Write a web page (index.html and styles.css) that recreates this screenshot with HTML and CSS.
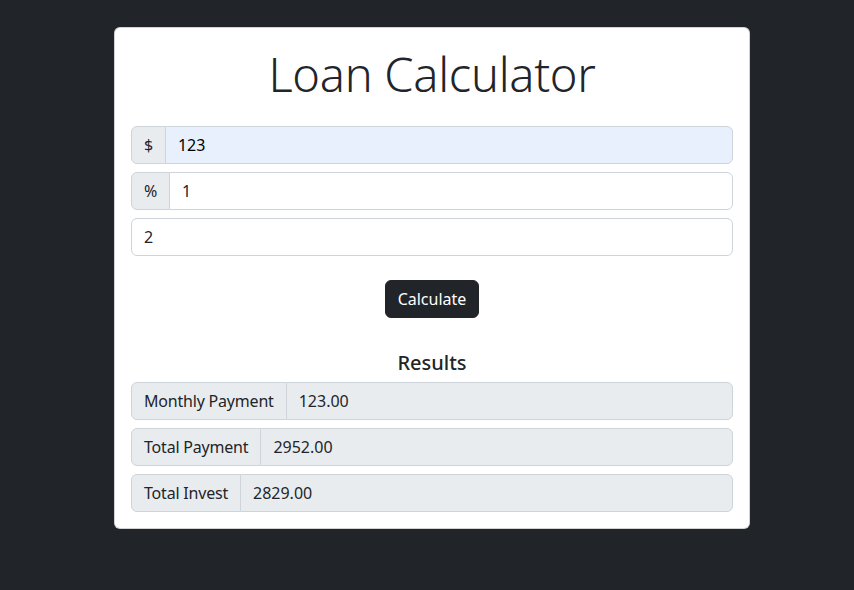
FILE: index.html
```html
<!DOCTYPE html>
<html lang="en">
<head>
<meta charset="utf-8">
<title>Loan Calculator</title>
<link rel="stylesheet" href="styles.css">
</head>
<body>
<div class="card">
  <h1 class="title">Loan Calculator</h1>
  <div class="field">
    <span class="addon">$</span>
    <input class="control autofill" type="text" value="123">
  </div>
  <div class="field">
    <span class="addon">%</span>
    <input class="control" type="text" value="1">
  </div>
  <div class="field">
    <input class="control" type="text" value="2">
  </div>
  <div class="actions">
    <button class="btn">Calculate</button>
  </div>
  <h2 class="results-title">Results</h2>
  <div class="field">
    <span class="addon">Monthly Payment</span>
    <input class="control readonly" type="text" value="123.00" readonly>
  </div>
  <div class="field">
    <span class="addon">Total Payment</span>
    <input class="control readonly" type="text" value="2952.00" readonly>
  </div>
  <div class="field last">
    <span class="addon">Total Invest</span>
    <input class="control readonly" type="text" value="2829.00" readonly>
  </div>
</div>
</body>
</html>
```
FILE: styles.css
```css
* { box-sizing: border-box; }
html, body { margin: 0; padding: 0; }
body {
  background: #212529;
  font-family: "Noto Sans", "Open Sans", sans-serif;
  font-size: 16px;
  color: #212529;
  padding: 27px 0 0 114px;
  min-height: 590px;
}
.card {
  width: 636px;
  background: #fff;
  border: 1px solid rgba(0,0,0,0.175);
  border-radius: 6px;
  padding: 16px 16px 16px 16px;
}
.title {
  margin: 0 0 21px;
  font-weight: 300;
  font-size: 47px;
  line-height: 61px;
  text-align: center;
  letter-spacing: -0.3px;
}
.field {
  display: flex;
  height: 38px;
  margin-bottom: 8px;
}
.field.last { margin-bottom: 0; }
.addon {
  display: flex;
  align-items: center;
  padding: 0 12px;
  background: #e9ecef;
  border: 1px solid #ced4da;
  border-radius: 6px 0 0 6px;
  white-space: nowrap;
  font-size: 16px;
  letter-spacing: -0.2px;
  color: #212529;
}
.control {
  flex: 1;
  min-width: 0;
  height: 38px;
  padding: 0 12px;
  font: inherit;
  color: #212529;
  background: #fff;
  border: 1px solid #ced4da;
  border-radius: 6px;
  outline: none;
}
.addon + .control {
  margin-left: -1px;
  border-radius: 0 6px 6px 0;
}
.control.autofill { background: #e8f0fe; color: #000; }
.control.readonly { background: #e9ecef; }
.actions {
  display: flex;
  justify-content: center;
  margin: 24px 0 33px;
}
.btn {
  height: 38px;
  padding: 0 12px;
  font: inherit;
  color: #fff;
  background: #212529;
  border: 1px solid #212529;
  border-radius: 6px;
}
.results-title {
  margin: 0 0 7px;
  font-size: 20px;
  font-weight: 500;
  line-height: 24px;
  text-align: center;
}
```
